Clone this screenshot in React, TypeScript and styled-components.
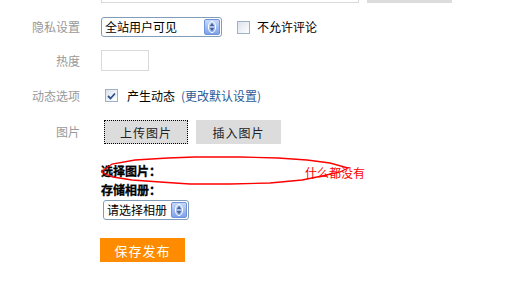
import styled, { createGlobalStyle } from "styled-components";

const GlobalStyle = createGlobalStyle`
  html, body {
    margin: 0;
    padding: 0;
    background: #fff;
    overflow: hidden;
  }
  body {
    font-family: "Noto Sans CJK SC", "Liberation Sans", sans-serif;
    font-size: 12px;
    color: #000;
  }
`;

const Form = styled.div`
  display: flex;
  flex-direction: column;
  width: 528px;
  height: 282px;
`;

const Row = styled.div<{ $top: number; $height: number; $align?: string }>`
  display: flex;
  align-items: ${(p) => p.$align || "center"};
  margin-top: ${(p) => p.$top}px;
  height: ${(p) => p.$height}px;
`;

const Label = styled.div`
  width: 80px;
  margin-right: 21px;
  text-align: right;
  color: #999;
  line-height: 14px;
  white-space: nowrap;
`;

const Field = styled.div<{ $gap?: number }>`
  display: flex;
  align-items: center;
  gap: ${(p) => p.$gap || 0}px;
`;

const TextInput = styled.div<{ $width: number; $height: number }>`
  box-sizing: border-box;
  width: ${(p) => p.$width}px;
  height: ${(p) => p.$height}px;
  border: 1px solid #d9d9d9;
  background: #fff;
`;

const GrayBlock = styled.div`
  width: 85px;
  height: 25px;
  margin-left: 8px;
  background: #dcdcdc;
`;

const Select = styled.div<{ $width: number }>`
  box-sizing: border-box;
  display: flex;
  align-items: stretch;
  width: ${(p) => p.$width}px;
  height: 20px;
  border: 1px solid #7f9db9;
  border-radius: 3px;
  background: #fff;
  overflow: hidden;
`;

const SelectText = styled.span`
  flex: 1;
  padding-left: 3px;
  line-height: 18px;
  font-size: 12px;
  white-space: nowrap;
`;

const SpinButton = styled.span`
  width: 16px;
  margin: 1px;
  border-radius: 2px;
  border: 1px solid #6f93d6;
  background: linear-gradient(to bottom, #c6d7fb 0%, #a7c1f5 45%, #7ea2ec 100%);
  display: flex;
  align-items: center;
  justify-content: center;
  box-sizing: border-box;
`;

const Spinner = () => (
  <SpinButton>
    <svg width="8" height="12" viewBox="0 0 8 12">
      <ellipse cx="4" cy="6" rx="3.6" ry="5.6" fill="none" stroke="#ffffff" strokeWidth="1" />
      <path d="M4 2 L6.2 5 H1.8 Z" fill="#4d6185" />
      <path d="M4 10 L6.2 7 H1.8 Z" fill="#4d6185" />
    </svg>
  </SpinButton>
);

const Box = styled.span`
  box-sizing: border-box;
  width: 13px;
  height: 13px;
  border: 1px solid #9fb1c9;
  background: linear-gradient(135deg, #dde3ec 0%, #f4f6f9 70%, #ffffff 100%);
  display: inline-flex;
  align-items: center;
  justify-content: center;
`;

const CheckItem = styled.label<{ $ml?: number; $gap?: number }>`
  display: flex;
  align-items: center;
  gap: ${(p) => p.$gap ?? 9}px;
  margin-left: ${(p) => p.$ml || 0}px;
  line-height: 14px;
  white-space: nowrap;
`;

const Link = styled.span`
  margin-left: 6px;
  color: #2b5b98;
`;

const Button = styled.div<{ $focused?: boolean }>`
  box-sizing: border-box;
  width: ${(p) => (p.$focused ? 84 : 85)}px;
  height: 24px;
  background: #dcdcdc;
  color: #222;
  font-size: 12px;
  display: flex;
  align-items: center;
  justify-content: center;
  letter-spacing: 1px;
  border: ${(p) => (p.$focused ? "1px dotted #000" : "none")};
  outline: ${(p) => (p.$focused ? "1px solid #dcdcdc" : "none")};
  outline-offset: -2px;
`;

const Upload = styled.div`
  position: relative;
  margin: 17px 0 0 101px;
  display: flex;
  flex-direction: column;
  align-items: flex-start;
`;

const Caption = styled.div`
  font-weight: bold;
  line-height: 19px;
  height: 19px;
  -webkit-text-stroke: 0.3px #000;
`;

const SaveButton = styled.div`
  width: 85px;
  height: 24px;
  margin-top: 18px;
  margin-left: -1px;
  background: #ff8c00;
  color: #fff;
  font-size: 13px;
  letter-spacing: 1px;
  display: flex;
  align-items: center;
  justify-content: center;
`;

const Scribble = styled.svg`
  position: absolute;
  left: -2px;
  top: -6px;
  overflow: visible;
  pointer-events: none;
`;

const Note = styled.span`
  position: absolute;
  left: 204px;
  top: 5px;
  color: #ff0000;
  line-height: 14px;
  white-space: nowrap;
`;

export default function App() {
  return (
    <>
      <GlobalStyle />
      <Form>
        <Row $top={-22} $height={25} $align="flex-start">
          <Label />
          <Field>
            <TextInput $width={258} $height={25} />
            <GrayBlock />
          </Field>
        </Row>

        <Row $top={14} $height={20}>
          <Label>隐私设置</Label>
          <Field>
            <Select $width={121}>
              <SelectText>全站用户可见</SelectText>
              <Spinner />
            </Select>
            <CheckItem $ml={15} $gap={7}>
              <Box />
              不允许评论
            </CheckItem>
          </Field>
        </Row>

        <Row $top={13} $height={21}>
          <Label>热度</Label>
          <TextInput $width={48} $height={21} />
        </Row>

        <Row $top={18} $height={13}>
          <Label>动态选项</Label>
          <CheckItem $ml={4}>
            <Box>
              <svg width="9" height="8" viewBox="0 0 9 8">
                <path d="M1 4 L3.5 6.5 L8 1.5" fill="none" stroke="#2f4f8f" strokeWidth="1.8" />
              </svg>
            </Box>
            <span>
              产生动态<Link>(更改默认设置)</Link>
            </span>
          </CheckItem>
        </Row>

        <Row $top={18} $height={24}>
          <Label>图片</Label>
          <Field $gap={8} style={{ marginLeft: 3 }}>
            <Button $focused>上传图片</Button>
            <Button>插入图片</Button>
          </Field>
        </Row>

        <Upload>
          <Caption>选择图片：</Caption>
          <Caption>存储相册：</Caption>
          <Field style={{ marginTop: 1, marginLeft: 2 }}>
            <Select $width={86}>
              <SelectText>请选择相册</SelectText>
              <Spinner />
            </Select>
          </Field>
          <SaveButton>保存发布</SaveButton>

          <Scribble width="260" height="34" viewBox="99 155 260 34">
            <polyline
              fill="none"
              stroke="#ff0000"
              strokeWidth="1.3"
              points="101,172 112,164 135,160 168,158 195,157 240,157 278,158 307,160 330,163 348,168 340,172 322,176 302,180 270,183 230,184 190,184 160,182 132,180 113,177 101,172"
            />
          </Scribble>
          <Note>什么都没有</Note>
        </Upload>
      </Form>
    </>
  );
}
